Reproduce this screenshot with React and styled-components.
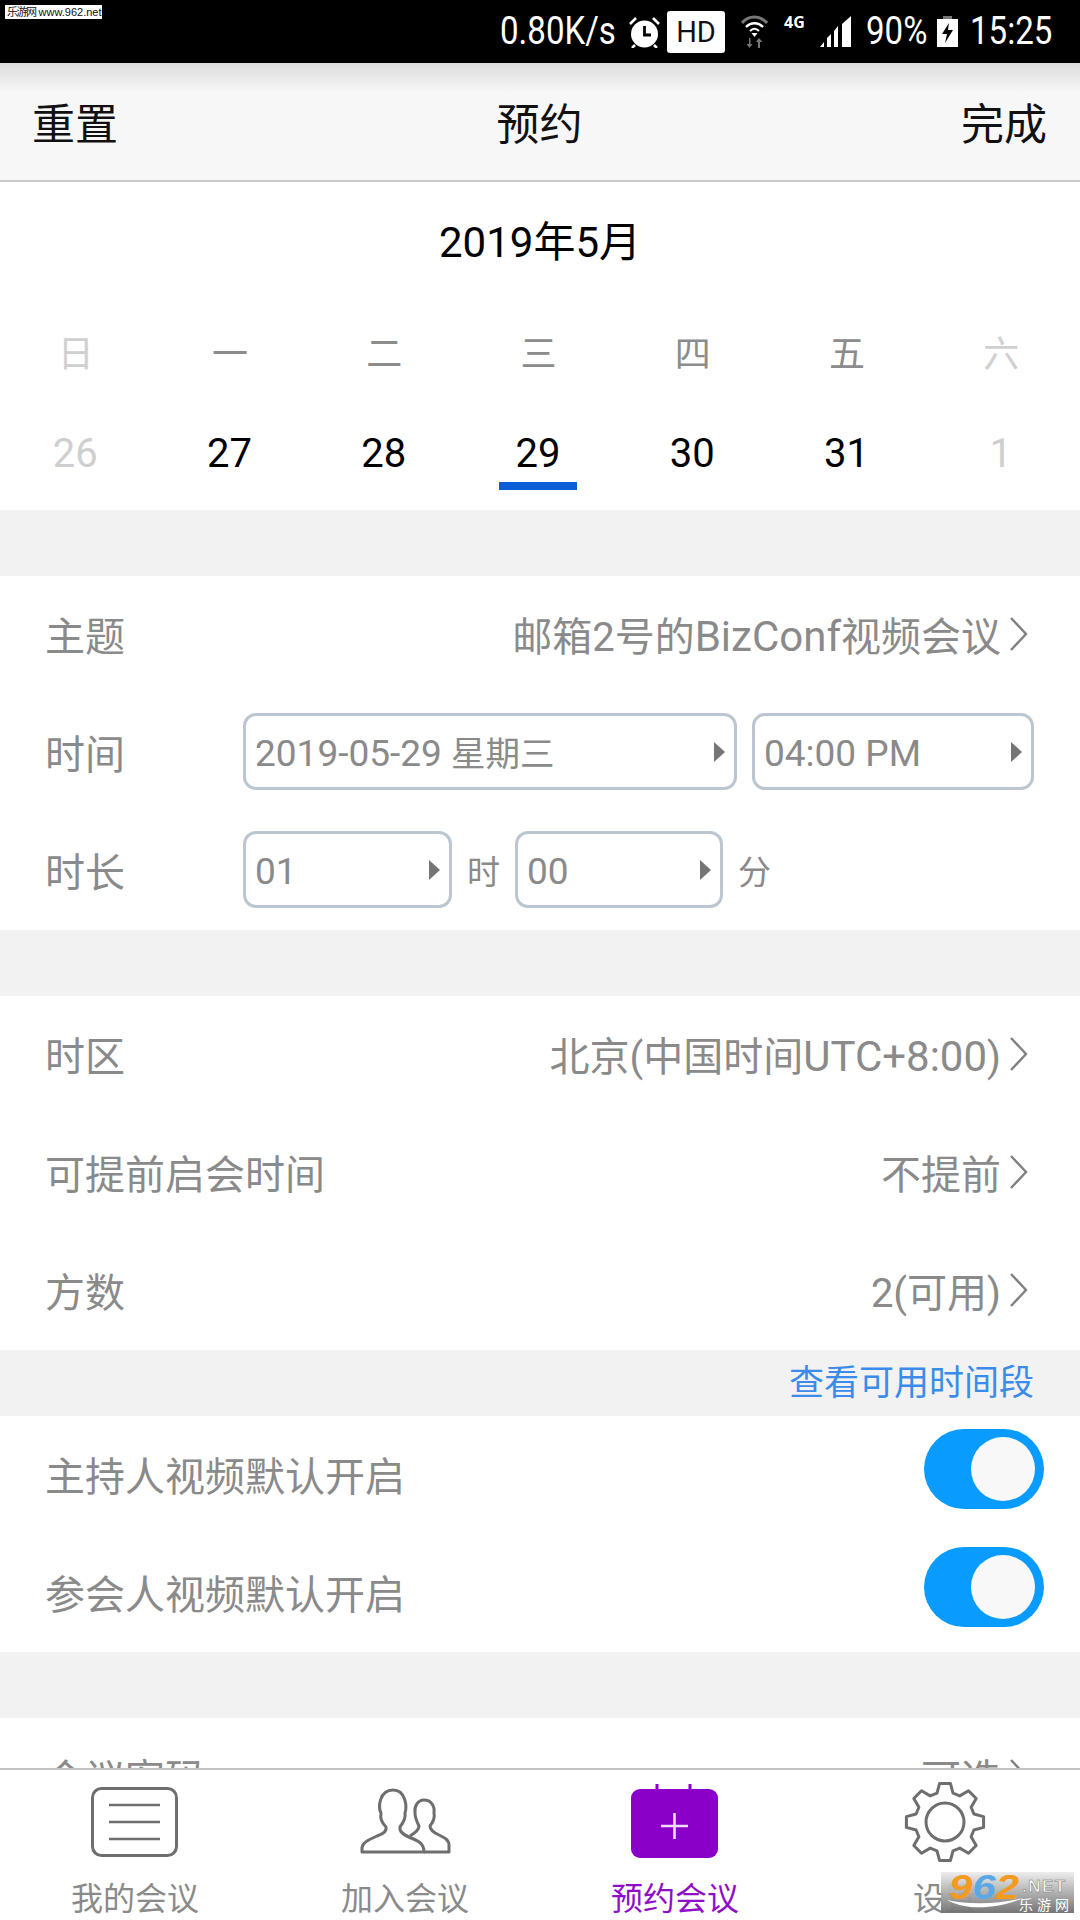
import React from 'react';
import styled, { createGlobalStyle } from 'styled-components';

const GlobalStyle = createGlobalStyle`
  html, body { margin: 0; padding: 0; background: #fff; }
  body { font-family: Roboto, "Noto Sans CJK SC", sans-serif; }
  * { box-sizing: border-box; }
`;

const GREY = '#8a8a8a';

function gearPath(cx, cy) {
  // 8 teeth, one pointing straight up
  const teeth = 8, rOut = 39, rIn = 30;
  const pts = [];
  for (let i = 0; i < teeth; i++) {
    const a = (i * 2 * Math.PI) / teeth - Math.PI / 2;
    [[-0.27, rIn], [-0.14, rOut], [0.14, rOut], [0.27, rIn]].forEach(([d, r]) => {
      pts.push(`${(cx + r * Math.cos(a + d)).toFixed(1)} ${(cy + r * Math.sin(a + d)).toFixed(1)}`);
    });
  }
  return 'M' + pts.join('L') + 'Z';
}

const days = [
  { w: '日', d: '26', off: true },
  { w: '一', d: '27' },
  { w: '二', d: '28' },
  { w: '三', d: '29', active: true },
  { w: '四', d: '30' },
  { w: '五', d: '31' },
  { w: '六', d: '1', off: true },
];

const Chevron = () => (
  <ChevronSvg viewBox="0 0 20 36">
    <path d="M2 2 L17 18 L2 34" fill="none" stroke="#808080" strokeWidth="2.4" />
  </ChevronSvg>
);

const Select = ({ width, children }) => (
  <SelectBox $width={width}>
    {children}
    <Caret />
  </SelectBox>
);

export default function App() {
  return (
    <Page>
      <GlobalStyle />
      <StatusBar>
        <SiteMark><b>乐游网</b> www.962.net</SiteMark>
        <StatusText $width={117}>0.80K/s</StatusText>
        <StatusIcon $gap={12} width="31" height="32" viewBox="0 0 31 32">
          <circle cx="15.5" cy="18" r="13.5" fill="#fff" />
          <path d="M15.5 10 V19 H22" fill="none" stroke="#000" strokeWidth="2.8" />
          <path d="M1 8 L7 2 M30 8 L24 2 M6 29 L3 32 M25 29 L28 32" stroke="#fff" strokeWidth="2.6" />
        </StatusIcon>
        <HdBadge>HD</HdBadge>
        <StatusIcon $gap={16} width="27" height="33" viewBox="0 0 27 33">
          <path d="M1 8 C8 0 19 0 26 8" fill="none" stroke="#777" strokeWidth="3" />
          <path d="M5 12 C10 7 17 7 22 12" fill="none" stroke="#fff" strokeWidth="2.4" />
          <path d="M9 16 C12 13 15 13 18 16" fill="none" stroke="#fff" strokeWidth="2.2" />
          <path d="M10.5 18 H16.5 L13.5 22 Z" fill="#fff" />
          <path d="M8 33 V27 H5.5 L8.5 23 L11.5 27 H9.5 V33 Z M19 23 V29 H21.5 L18 33 L15 29 H17 V23 Z" fill="#777" transform="matrix(1 0 0 -1 0 56)" />
        </StatusIcon>
        <NetLabel>4G</NetLabel>
        <StatusIcon $gap={12} width="32" height="31" viewBox="0 0 32 31">
          <path d="M0 31 L4 26 V31 Z M7 31 V22 L11 18 V31 Z M14 31 V15 L18 10 V31 Z M22 31 V8 L31 0 V31 Z" fill="#fff" />
        </StatusIcon>
        <StatusText $gap={14} $width={61}>90%</StatusText>
        <StatusIcon $gap={10} width="21" height="31" viewBox="0 0 21 31">
          <path d="M6 0 H15 V3 H21 V31 H0 V3 H6 Z" fill="#fff" />
          <path d="M6 0 H15 V3 H6 Z" fill="#777" />
          <path d="M12 7 L5 18 H10 L8 27 L16 14 H11 Z" fill="#000" />
        </StatusIcon>
        <StatusText $gap={12} $width={82}>15:25</StatusText>
      </StatusBar>

      <NavBar>
        <NavTitle>重置</NavTitle>
        <NavTitle>预约</NavTitle>
        <NavTitle>完成</NavTitle>
      </NavBar>

      <Main>
        <Calendar>
          <MonthTitle>2019年5月</MonthTitle>
          <WeekGrid>
            {days.map((x) => (
              <WeekDay key={x.w} $off={x.off}>{x.w}</WeekDay>
            ))}
            {days.map((x) => (
              <DateCell key={x.d} $off={x.off} $active={x.active}>{x.d}</DateCell>
            ))}
          </WeekGrid>
        </Calendar>

        <Gap />

        <Section>
          <Row>
            <Label>主题</Label>
            <Value><span>邮箱2号的<Latin>BizConf</Latin>视频会议</span><Chevron /></Value>
          </Row>
          <Row>
            <Label>时间</Label>
            <Controls>
              <Select width={494}>2019-05-29 <WeekName>星期三</WeekName></Select>
              <Select width={282}>04:00 PM</Select>
            </Controls>
          </Row>
          <Row>
            <Label>时长</Label>
            <Controls>
              <Select width={209}>01</Select>
              <Unit>时</Unit>
              <Select width={208}>00</Select>
              <Unit>分</Unit>
            </Controls>
          </Row>
        </Section>

        <Gap />

        <Section>
          <Row>
            <Label>时区</Label>
            <Value><span>北京(中国时间<Latin>UTC+8:00</Latin>)</span><Chevron /></Value>
          </Row>
          <Row>
            <Label>可提前启会时间</Label>
            <Value>不提前<Chevron /></Value>
          </Row>
          <Row>
            <Label>方数</Label>
            <Value>2(可用)<Chevron /></Value>
          </Row>
        </Section>

        <LinkBar>查看可用时间段</LinkBar>

        <Section>
          <Row>
            <Label>主持人视频默认开启</Label>
            <Toggle><Knob /></Toggle>
          </Row>
          <Row>
            <Label>参会人视频默认开启</Label>
            <Toggle><Knob /></Toggle>
          </Row>
        </Section>

        <Gap />

        <Section>
          <Row>
            <Label>会议密码</Label>
            <Value>可选<Chevron /></Value>
          </Row>
        </Section>
      </Main>

      <TabBar>
        <Tab>
          <TabIcon viewBox="0 0 100 84">
            <rect x="7.5" y="8.5" width="84" height="67" rx="9" fill="none" stroke="#6e6e6e" strokeWidth="3" />
            <path d="M24 25 H75 M24 42 H75 M24 59 H75" stroke="#6e6e6e" strokeWidth="2.6" />
          </TabIcon>
          <TabLabel>我的会议</TabLabel>
        </Tab>
        <Tab>
          <TabIcon viewBox="0 0 100 84">
            <path
              d="M7 72 V68 C7 63 13 60 22 56 C28 54 32 51 31 47 C27 43 25 38 26 33 C23 28 24 10 38 10 C51 10 52 27 50 33 C51 38 48 43 45 47 C44 52 49 55 56 58 C64 61 69 64 69 72 Z"
              fill="none" stroke="#6e6e6e" strokeWidth="3" strokeLinejoin="round"
            />
            <path
              d="M69 72 H94 V65 C94 60 90 58 84 55 C78 52 75 50 75 46 C78 42 80 37 79 33 C80 26 76 20 69 20 C63 20 59 26 60 33 C60 38 62 42 64 46 C64 50 60 53 55 56"
              fill="none" stroke="#6e6e6e" strokeWidth="3" strokeLinejoin="round"
            />
          </TabIcon>
          <TabLabel>加入会议</TabLabel>
        </Tab>
        <Tab>
          <TabIcon viewBox="0 0 100 84">
            <rect x="6" y="9" width="87" height="69" rx="9" fill="#8a00c8" />
            <path d="M32 4 V10 M65 4 V10" stroke="#8a00c8" strokeWidth="3" />
            <path d="M36 46 H63 M49.5 33 V59" stroke="#f3dcff" strokeWidth="2.6" />
          </TabIcon>
          <TabLabel $active>预约会议</TabLabel>
        </Tab>
        <Tab>
          <TabIcon viewBox="0 0 100 84">
            <path d={gearPath(50, 42)} fill="none" stroke="#6e6e6e" strokeWidth="3" strokeLinejoin="round" />
            <circle cx="50" cy="42" r="19" fill="none" stroke="#6e6e6e" strokeWidth="3" />
          </TabIcon>
          <TabLabel>设置</TabLabel>
        </Tab>
      </TabBar>

      <Stamp>
        <StampSwoosh viewBox="0 0 76 14">
          <path d="M0 3 C20 14 50 12 76 1 C52 7 24 8 0 3 Z" fill="#fff" />
        </StampSwoosh>
        <StampBrand><i>9</i><em>6</em><i>2</i></StampBrand>
        <StampSide>
          <StampNet>.NET</StampNet>
          <StampCn>乐游网</StampCn>
        </StampSide>
      </Stamp>
    </Page>
  );
}

const Page = styled.div`
  position: relative;
  width: 1080px;
  height: 1920px;
  display: flex;
  flex-direction: column;
  overflow: hidden;
  background: #fff;
`;

const StatusBar = styled.div`
  flex: none;
  height: 63px;
  background: #000;
  display: flex;
  justify-content: flex-end;
  align-items: center;
  padding-right: 28px;
  color: #fff;
`;

const SiteMark = styled.div`
  position: absolute;
  left: 5px;
  top: 5px;
  width: 97px;
  height: 14px;
  background: #fff;
  color: #111;
  font-family: "Liberation Sans", "Noto Sans CJK SC", sans-serif;
  font-size: 11px;
  line-height: 14px;
  white-space: nowrap;
  padding-left: 2px;
  b { font-weight: 400; letter-spacing: -1.5px; }
`;

const StatusText = styled.div`
  width: ${(p) => p.$width}px;
  margin-left: ${(p) => p.$gap || 0}px;
  font-size: 38px;
  line-height: 63px;
  white-space: nowrap;
  transform: scaleX(0.87);
  transform-origin: left center;
`;

const StatusIcon = styled.svg`
  flex: none;
  margin-left: ${(p) => p.$gap || 0}px;
`;

const HdBadge = styled.div`
  width: 58px;
  height: 42px;
  margin-left: 7px;
  border-radius: 3px;
  background: #fff;
  color: #111;
  font-size: 29px;
  line-height: 42px;
  text-align: center;
`;

const NetLabel = styled.div`
  width: 24px;
  margin-left: 16px;
  margin-bottom: 20px;
  font-family: "Open Sans", sans-serif;
  font-size: 16px;
  font-weight: 700;
  line-height: 16px;
  white-space: nowrap;
`;

const NavBar = styled.div`
  flex: none;
  height: 119px;
  padding: 0 33px 2px 32px;
  display: flex;
  justify-content: space-between;
  align-items: center;
  background: linear-gradient(#dcdcdc 0, #f7f7f7 30px);
  border-bottom: 2px solid #c9c9c9;
`;

const NavTitle = styled.div`
  font-size: 43px;
  color: #111;
`;

const Main = styled.div`
  flex: 1;
  min-height: 0;
  overflow: hidden;
`;

const Calendar = styled.div`
  height: 328px;
  padding-top: 31px;
`;

const MonthTitle = styled.div`
  height: 60px;
  font-size: 42px;
  line-height: 60px;
  text-align: center;
  color: #000;
`;

const WeekGrid = styled.div`
  display: grid;
  grid-template-columns: repeat(7, 1fr);
  margin-top: 50px;
`;

const WeekDay = styled.div`
  height: 103px;
  padding-right: 3px;
  font-size: 36px;
  line-height: 64px;
  text-align: center;
  color: ${(p) => (p.$off ? '#d0d0d0' : '#8c8c8c')};
`;

const DateCell = styled.div`
  position: relative;
  height: 70px;
  font-size: 40px;
  line-height: 56px;
  text-align: center;
  padding-right: 4px;
  color: ${(p) => (p.$off ? '#cfcfcf' : '#000')};
  &::after {
    content: '';
    display: ${(p) => (p.$active ? 'block' : 'none')};
    position: absolute;
    left: 36px;
    bottom: 6px;
    width: 78px;
    height: 8px;
    background: #0a5fd8;
  }
`;

const Gap = styled.div`
  height: 66px;
  background: #f2f2f2;
`;

const Section = styled.div`
  background: #fff;
`;

const Row = styled.div`
  height: 118px;
  padding: 0 36px 3px 45px;
  display: flex;
  align-items: center;
  justify-content: space-between;
`;

const Label = styled.div`
  font-size: 40px;
  color: ${GREY};
  white-space: nowrap;
`;

const Value = styled.div`
  display: flex;
  align-items: center;
  gap: 8px;
  padding-right: 15px;
  font-size: 40px;
  color: ${GREY};
  white-space: nowrap;
`;

const Latin = styled.span`
  font-size: 42px;
`;

const ChevronSvg = styled.svg`
  width: 20px;
  height: 36px;
  flex: none;
`;

const Controls = styled.div`
  width: 791px;
  margin-right: 10px;
  display: flex;
  align-items: center;
  gap: 15px;
`;

const SelectBox = styled.div`
  position: relative;
  width: ${(p) => p.$width}px;
  height: 77px;
  padding: 4px 0 0 9px;
  border: 3px solid #bcc6d0;
  border-radius: 13px;
  font-size: 37px;
  line-height: 67px;
  color: ${GREY};
  white-space: nowrap;
`;

const WeekName = styled.span`
  font-size: 34.5px;
`;

const Caret = styled.span`
  position: absolute;
  right: 9px;
  top: 26px;
  border-left: 11px solid #757575;
  border-top: 10px solid transparent;
  border-bottom: 10px solid transparent;
`;

const Unit = styled.div`
  width: 33px;
  font-size: 33px;
  color: ${GREY};
`;

const LinkBar = styled.div`
  height: 66px;
  padding: 1px 46px 0 0;
  background: #f2f2f2;
  font-size: 35px;
  line-height: 66px;
  text-align: right;
  color: #3a8bea;
`;

const Toggle = styled.div`
  width: 120px;
  height: 80px;
  margin-top: -10px;
  padding: 8px 9px;
  border-radius: 40px;
  background: #0a9bff;
  display: flex;
  justify-content: flex-end;
`;

const Knob = styled.div`
  width: 64px;
  height: 64px;
  border-radius: 50%;
  background: #f8f8f8;
`;

const TabBar = styled.div`
  flex: none;
  height: 152px;
  padding-top: 10px;
  display: grid;
  grid-template-columns: repeat(4, 1fr);
  background: #fff;
  border-top: 2px solid #c4c4c4;
`;

const Tab = styled.div`
  display: flex;
  flex-direction: column;
  align-items: center;
`;

const TabIcon = styled.svg`
  width: 100px;
  height: 84px;
  flex: none;
`;

const TabLabel = styled.div`
  margin-top: 13px;
  font-size: 32px;
  line-height: 44px;
  white-space: nowrap;
  color: ${(p) => (p.$active ? '#8f0fc9' : '#8a8a8a')};
`;

const Stamp = styled.div`
  position: absolute;
  left: 941px;
  top: 1872px;
  width: 133px;
  height: 41px;
  padding-left: 8px;
  display: flex;
  background: linear-gradient(rgba(236, 236, 236, 0.95), rgba(110, 110, 110, 0.95));
  font-family: "Liberation Sans", "Noto Sans CJK SC", sans-serif;
`;

const StampSwoosh = styled.svg`
  position: absolute;
  left: 6px;
  bottom: 2px;
  width: 76px;
  height: 14px;
`;

const StampBrand = styled.div`
  flex: none;
  width: 73px;
  font-size: 35px;
  font-weight: 700;
  line-height: 30px;
  white-space: nowrap;
  transform: scaleX(1.2);
  transform-origin: left center;
  i { color: #f39a1f; font-style: italic; }
  em { color: #5aa9e6; font-style: italic; }
`;

const StampSide = styled.div`
  display: flex;
  flex-direction: column;
  padding-top: 6px;
  white-space: nowrap;
  color: #fff;
`;

const StampNet = styled.div`
  font-size: 17px;
  font-weight: 700;
  line-height: 18px;
  letter-spacing: 1.5px;
  color: #f4f4f4;
  -webkit-text-stroke: 0.5px #777;
`;

const StampCn = styled.div`
  margin-top: 2px;
  margin-left: -3px;
  font-size: 14px;
  line-height: 14px;
  letter-spacing: 4px;
  color: #fff;
`;
